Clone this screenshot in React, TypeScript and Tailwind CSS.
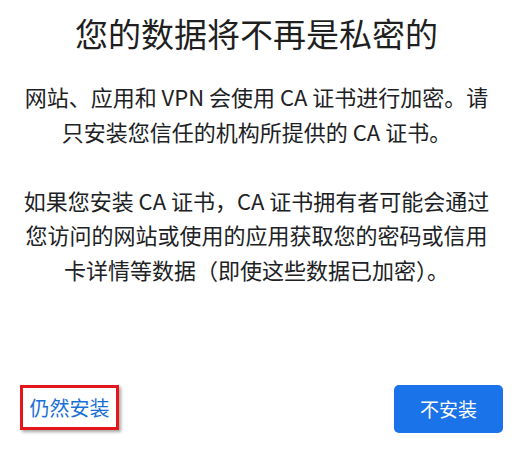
export default function App() {
  const font = { fontFamily: '"Noto Sans CJK SC", "Noto Sans", sans-serif' };

  return (
    <div className="flex h-[451px] w-full flex-col bg-white text-[#202124]" style={font}>
      <h1 className="pt-[11px] text-center text-[33px] font-normal leading-[44px] text-[#1f1f1f]">
        您的数据将不再是私密的
      </h1>

      <div className="mt-[24px] px-[14px] text-center text-[22px] leading-[34.5px]">
        <p>
          网站、应用和 VPN 会使用 CA 证书进行加密。请
          <br />
          只安装您信任的机构所提供的 CA 证书。
        </p>
        <p className="mt-[34.5px]">
          如果您安装 CA 证书，CA 证书拥有者可能会通过
          <br />
          您访问的网站或使用的应用获取您的密码或信用
          <br />
          卡详情等数据（即使这些数据已加密）。
        </p>
      </div>

      <div className="mt-auto flex items-start justify-between pb-[18px] pl-[20px] pr-[10px]">
        <button
          type="button"
          className="flex h-[45px] w-[99px] items-center justify-center border-[3px] border-[#e3161c] text-[20px] text-[#1a6fd6] shadow-[2px_2px_3px_rgba(0,0,0,0.35)]"
        >
          仍然安装
        </button>
        <button
          type="button"
          className="flex h-[48px] w-[109px] items-center justify-center rounded-[5px] bg-[#1a73e8] text-[19px] text-white"
        >
          不安装
        </button>
      </div>
    </div>
  );
}
